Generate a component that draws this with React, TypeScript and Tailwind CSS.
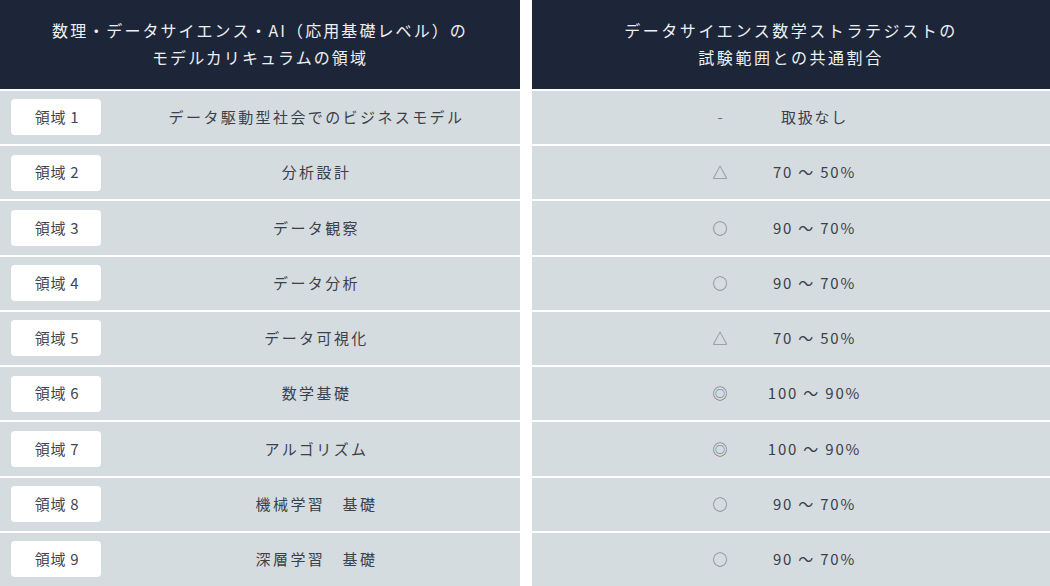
import React from "react";

const rows = [
  { n: 1, name: "データ駆動型社会でのビジネスモデル", sym: "-", val: "取扱なし" },
  { n: 2, name: "分析設計", sym: "△", val: "70 〜 50%" },
  { n: 3, name: "データ観察", sym: "○", val: "90 〜 70%" },
  { n: 4, name: "データ分析", sym: "○", val: "90 〜 70%" },
  { n: 5, name: "データ可視化", sym: "△", val: "70 〜 50%" },
  { n: 6, name: "数学基礎", sym: "◎", val: "100 〜 90%" },
  { n: 7, name: "アルゴリズム", sym: "◎", val: "100 〜 90%" },
  { n: 8, name: "機械学習　基礎", sym: "○", val: "90 〜 70%" },
  { n: 9, name: "深層学習　基礎", sym: "○", val: "90 〜 70%" },
];

export default function App() {
  return (
    <div
      className="w-[1050px] h-[586px] overflow-hidden bg-white flex gap-[12px]"
      style={{ fontFamily: '"Noto Sans CJK JP", "Noto Sans", sans-serif' }}
    >
      <div className="w-[520px] flex flex-col gap-[2px]">
        <div className="h-[89px] bg-[#1d2638] text-[#eef0f3] text-[16px] leading-[27px] tracking-[0.13em] flex flex-col items-center justify-center">
          <div>数理・データサイエンス・AI（応用基礎レベル）の</div>
          <div>モデルカリキュラムの領域</div>
        </div>
        {rows.map((r) => (
          <div key={r.n} className="h-[53.25px] shrink-0 bg-[#d5dce0] flex items-center pl-[11px]">
            <div className="w-[90px] h-[36px] bg-white rounded-[4px] flex items-center justify-center text-[15px] text-[#3f4650] tracking-[0.05em] pl-[2px]">
              領域 {r.n}
            </div>
            <div className="flex-1 ml-[12px] text-center text-[15px] text-[#3a414b] tracking-[0.16em]">
              {r.name}
            </div>
          </div>
        ))}
      </div>
      <div className="flex-1 flex flex-col gap-[2px]">
        <div className="h-[89px] bg-[#1d2638] text-[#eef0f3] text-[16px] leading-[27px] tracking-[0.16em] flex flex-col items-center justify-center">
          <div>データサイエンス数学ストラテジストの</div>
          <div>試験範囲との共通割合</div>
        </div>
        {rows.map((r) => (
          <div key={r.n} className="h-[53.25px] shrink-0 bg-[#d5dce0] flex items-center justify-center">
            <div className="w-[44px] text-center text-[15px] text-[#6b7280]">{r.sym}</div>
            <div className="w-[142px] text-center text-[15px] text-[#3a414b] tracking-[0.12em] pl-[3px]">{r.val}</div>
          </div>
        ))}
      </div>
    </div>
  );
}
